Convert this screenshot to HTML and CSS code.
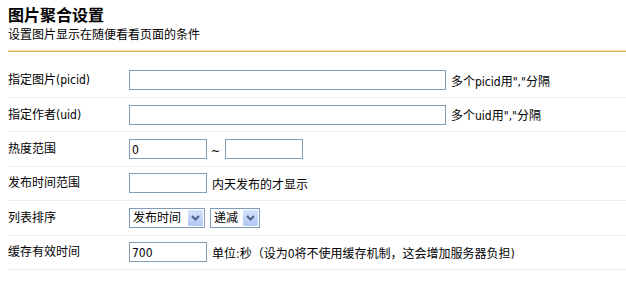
FILE: index.html
```html
<!DOCTYPE html>
<html lang="zh-CN">
<head>
    <meta charset="UTF-8">
    <title>图片聚合设置</title>
    <link rel="stylesheet" href="styles.css">
</head>
<body>
    <div class="page">
        <!-- 标题 -->
        <div class="head">
            <h3 class="title">图片聚合设置</h3>
            <p class="desc">设置图片显示在随便看看页面的条件</p>
        </div>

        <!-- 设置项 -->
        <div class="form">
            <div class="row">
                <label class="label">指定图片(picid)</label>
                <div class="field">
                    <input class="text wide" type="text">
                    <span class="tip">多个picid用","分隔</span>
                </div>
            </div>
            <div class="row">
                <label class="label">指定作者(uid)</label>
                <div class="field">
                    <input class="text wide" type="text">
                    <span class="tip">多个uid用","分隔</span>
                </div>
            </div>
            <div class="row">
                <label class="label">热度范围</label>
                <div class="field">
                    <input class="text short" type="text" value="0">
                    <span class="tilde">~</span>
                    <input class="text short" type="text">
                </div>
            </div>
            <div class="row">
                <label class="label">发布时间范围</label>
                <div class="field">
                    <input class="text short" type="text">
                    <span class="tip">内天发布的才显示</span>
                </div>
            </div>
            <div class="row">
                <label class="label">列表排序</label>
                <div class="field">
                    <span class="select-wrap order">
                        <select class="select">
                            <option>发布时间</option>
                            <option>热度</option>
                        </select>
                        <svg class="arrow" width="15" height="16" viewBox="0 0 15 16">
                            <path d="M4 6 L7.5 9.5 L11 6" fill="none" stroke="#4d6185" stroke-width="2"/>
                        </svg>
                    </span>
                    <span class="select-wrap sort">
                        <select class="select">
                            <option>递减</option>
                            <option>递增</option>
                        </select>
                        <svg class="arrow" width="15" height="16" viewBox="0 0 15 16">
                            <path d="M4 6 L7.5 9.5 L11 6" fill="none" stroke="#4d6185" stroke-width="2"/>
                        </svg>
                    </span>
                </div>
            </div>
            <div class="row">
                <label class="label">缓存有效时间</label>
                <div class="field">
                    <input class="text short" type="text" value="700">
                    <span class="tip">单位:秒（设为0将不使用缓存机制，这会增加服务器负担)</span>
                </div>
            </div>
        </div>
    </div>
</body>
</html>
```

FILE: styles.css
```css
body {
    margin: 0;
    background: #fff;
    color: #000;
    font-family: "DejaVu Sans Condensed", "Noto Sans CJK SC", sans-serif;
    font-size: 12px;
}
.page {
    padding-left: 8px;
}
/* 标题 */
.head {
    padding-top: 4px;
    padding-bottom: 9px;
    border-bottom: 1px solid #d4b462;
    box-shadow: 0 -1px 0 #f3e2ad inset;
}
.title {
    margin: 0;
    font-size: 16px;
    line-height: 21px;
    font-weight: bold;
    font-family: "Noto Sans CJK SC", sans-serif;
}
.desc {
    margin: 0;
    line-height: 17px;
    font-family: "Noto Sans CJK SC", sans-serif;
}
/* 设置项 */
.form {
    padding-top: 11.6px;
}
.row {
    display: flex;
    align-items: center;
    height: 33.4px;
    border-bottom: 1px solid #ececec;
}
.label {
    width: 121px;
    flex-shrink: 0;
    margin-top: -3px;
}
.field {
    display: flex;
    align-items: center;
    gap: 5px;
}
.text {
    box-sizing: border-box;
    height: 20px;
    margin: 0;
    padding: 2px 2px 0;
    border: 1px solid #7f9db9;
    font: inherit;
    font-size: 12px;
    color: #000;
    background: #fff;
    outline: none;
}
.wide {
    width: 317px;
}
.short {
    width: 78px;
}
.tilde {
    margin: 0 0 0 -1px;
    padding-top: 3px;
}
.tip {
    white-space: nowrap;
}
/* 下拉框 */
.select-wrap {
    position: relative;
    display: block;
    height: 20px;
}
.order {
    width: 76px;
}
.sort {
    width: 50px;
}
.select {
    box-sizing: border-box;
    width: 100%;
    height: 20px;
    margin: 0;
    padding: 0 0 0 3px;
    border: 1px solid #7f9db9;
    border-radius: 0;
    background: #fff;
    font: inherit;
    color: #000;
    appearance: none;
    -webkit-appearance: none;
    outline: none;
}
.arrow {
    position: absolute;
    top: 2px;
    right: 2px;
    background: linear-gradient(#d4e1fd, #b4c8f6);
    border-radius: 1px;
    pointer-events: none;
}
```
